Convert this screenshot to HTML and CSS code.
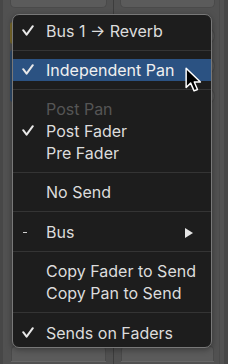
FILE: index.html
```html
<!DOCTYPE html>
<html lang="en">
<head>
<meta charset="utf-8">
<link rel="stylesheet" href="styles.css">
</head>
<body>
<div class="stage">
  <div class="mixer">
    <div class="strip strip-left">
      <div class="cell cell-top"></div>
      <div class="tabs">
        <div class="tab tab-yellow"></div>
        <div class="tab tab-blue"></div>
      </div>
      <div class="cell cell-bottom"></div>
    </div>
    <div class="divider"></div>
    <div class="strip strip-right">
      <div class="cell cell-top"></div>
      <div class="knobs">
        <div class="knob"></div>
        <div class="knob"></div>
        <div class="knob"></div>
      </div>
      <div class="cell cell-bottom"></div>
    </div>
  </div>

  <div class="menu">
    <div class="item">
      <span class="mark"><svg class="check" viewBox="0 0 12 11" width="12" height="11"><path d="M1.2 5.2 L4.6 9.6 L10.8 1.2"/></svg></span>
      <span class="label">Bus 1 → Reverb</span>
    </div>
    <div class="sep"></div>
    <div class="item item-active">
      <span class="mark"><svg class="check" viewBox="0 0 12 11" width="12" height="11"><path d="M1.2 5.2 L4.6 9.6 L10.8 1.2"/></svg></span>
      <span class="label">Independent Pan</span>
    </div>
    <div class="sep"></div>
    <div class="item item-disabled">
      <span class="mark"></span>
      <span class="label">Post Pan</span>
    </div>
    <div class="item">
      <span class="mark"><svg class="check" viewBox="0 0 12 11" width="12" height="11"><path d="M1.2 5.2 L4.6 9.6 L10.8 1.2"/></svg></span>
      <span class="label">Post Fader</span>
    </div>
    <div class="item">
      <span class="mark"></span>
      <span class="label">Pre Fader</span>
    </div>
    <div class="sep"></div>
    <div class="item">
      <span class="mark"></span>
      <span class="label">No Send</span>
    </div>
    <div class="sep sep-wide"></div>
    <div class="item">
      <span class="mark"><span class="dash"></span></span>
      <span class="label">Bus</span>
      <span class="submenu"></span>
    </div>
    <div class="sep"></div>
    <div class="item">
      <span class="mark"></span>
      <span class="label">Copy Fader to Send</span>
    </div>
    <div class="item">
      <span class="mark"></span>
      <span class="label">Copy Pan to Send</span>
    </div>
    <div class="sep sep-wide"></div>
    <div class="item">
      <span class="mark"><svg class="check" viewBox="0 0 12 11" width="12" height="11"><path d="M1.2 5.2 L4.6 9.6 L10.8 1.2"/></svg></span>
      <span class="label">Sends on Faders</span>
    </div>
  </div>

  <svg class="cursor" viewBox="0 0 15 22" width="17" height="25">
    <path d="M1 1 L1 18 L5 14.2 L8 21 L11 19.8 L8.2 13.2 L13.6 13.2 Z"/>
  </svg>
</div>
</body>
</html>
```
FILE: styles.css
```css
* { box-sizing: border-box; }

html, body {
  margin: 0;
  padding: 0;
}

body {
  width: 228px;
  height: 364px;
  overflow: hidden;
  background: #4f4f4f;
  font-family: Inter, "Noto Sans", "Liberation Sans", sans-serif;
}

.stage {
  position: relative;
  width: 228px;
  height: 364px;
}

/* background mixer */
.mixer {
  display: flex;
  height: 364px;
}

.strip {
  display: flex;
  flex-direction: column;
  justify-content: space-between;
  height: 364px;
  padding-bottom: 3px;
}

.strip-left {
  width: 113px;
  padding-left: 10px;
  padding-right: 6px;
  background: linear-gradient(to right, #474747 0, #474747 3px, #515151 3px);
}

.strip-right {
  flex: 1;
  padding-left: 6px;
  padding-right: 13px;
  background: linear-gradient(to left, #474747 0, #474747 4px, #525252 4px, #525252 8px, #4a4a4a 8px, #4a4a4a 9px, #515151 9px);
}

.divider {
  width: 1px;
  background: #3d3d3d;
}

.cell {
  background: #5b5b5b;
  border: 1px solid #4a4a4a;
}

.cell-top {
  height: 8px;
  border-top: 0;
  border-radius: 0 0 5px 5px;
}

.cell-bottom {
  height: 15px;
  border-bottom: 0;
  border-radius: 4px 4px 0 0;
  margin: 0 1px;
  box-shadow: 0 1px 0 #666;
}

.tabs {
  flex: 1;
  display: flex;
  flex-direction: column;
  gap: 6px;
  padding-top: 14px;
}

.tab {
  width: 20px;
  border-radius: 3px;
}

.tab-yellow {
  height: 22px;
  background: #7a6a2c;
}

.tab-blue {
  height: 52px;
  background: #2e4a6a;
}

.knobs {
  flex: 1;
  display: flex;
  flex-direction: column;
  align-items: flex-end;
  gap: 14px;
  padding-top: 20px;
}

.knob {
  width: 14px;
  height: 16px;
  border-radius: 50%;
  background: #585858;
  border: 1px solid #494949;
}

/* menu */
.menu {
  position: absolute;
  left: 12px;
  top: 14px;
  width: 200px;
  height: 334px;
  overflow: hidden;
  background: #1d1d1d;
  border: 1px solid #787878;
  border-radius: 7px;
  padding: 5px 0 3px 0;
  box-shadow: 0 2px 6px rgba(0, 0, 0, 0.35);
  color: #dcdcdc;
}

.item {
  display: flex;
  align-items: center;
  height: 22px;
  font-size: 16px;
  line-height: 22px;
  white-space: nowrap;
}

.item-active {
  background: #2b5282;
  color: #f0f0f0;
}

.item-disabled {
  color: #555555;
}

.mark {
  width: 33px;
  padding-left: 9px;
  display: flex;
  align-items: center;
  height: 22px;
}

.check {
  display: block;
  margin-top: -1px;
}

.check path {
  fill: none;
  stroke: #e8e8e8;
  stroke-width: 2;
  stroke-linecap: round;
  stroke-linejoin: round;
}

.dash {
  display: block;
  width: 4px;
  height: 1.5px;
  margin-left: 1px;
  margin-top: 1px;
  background: #d0d0d0;
}

.label {
  flex: 1;
}

.submenu {
  width: 0;
  height: 0;
  border-left: 8.5px solid #e6e6e6;
  border-top: 5px solid transparent;
  border-bottom: 5px solid transparent;
  margin-right: 18px;
  margin-top: 2px;
}

.sep {
  height: 17px;
  padding: 8px 0;
}

.sep-wide {
  height: 18px;
  padding: 8px 0 9px;
}

.sep::before {
  content: "";
  display: block;
  height: 1px;
  background: #343434;
}

/* cursor */
.cursor {
  position: absolute;
  left: 185px;
  top: 67px;
}

.cursor path {
  fill: #000;
  stroke: #fff;
  stroke-width: 1.3;
  stroke-linejoin: round;
}
```
